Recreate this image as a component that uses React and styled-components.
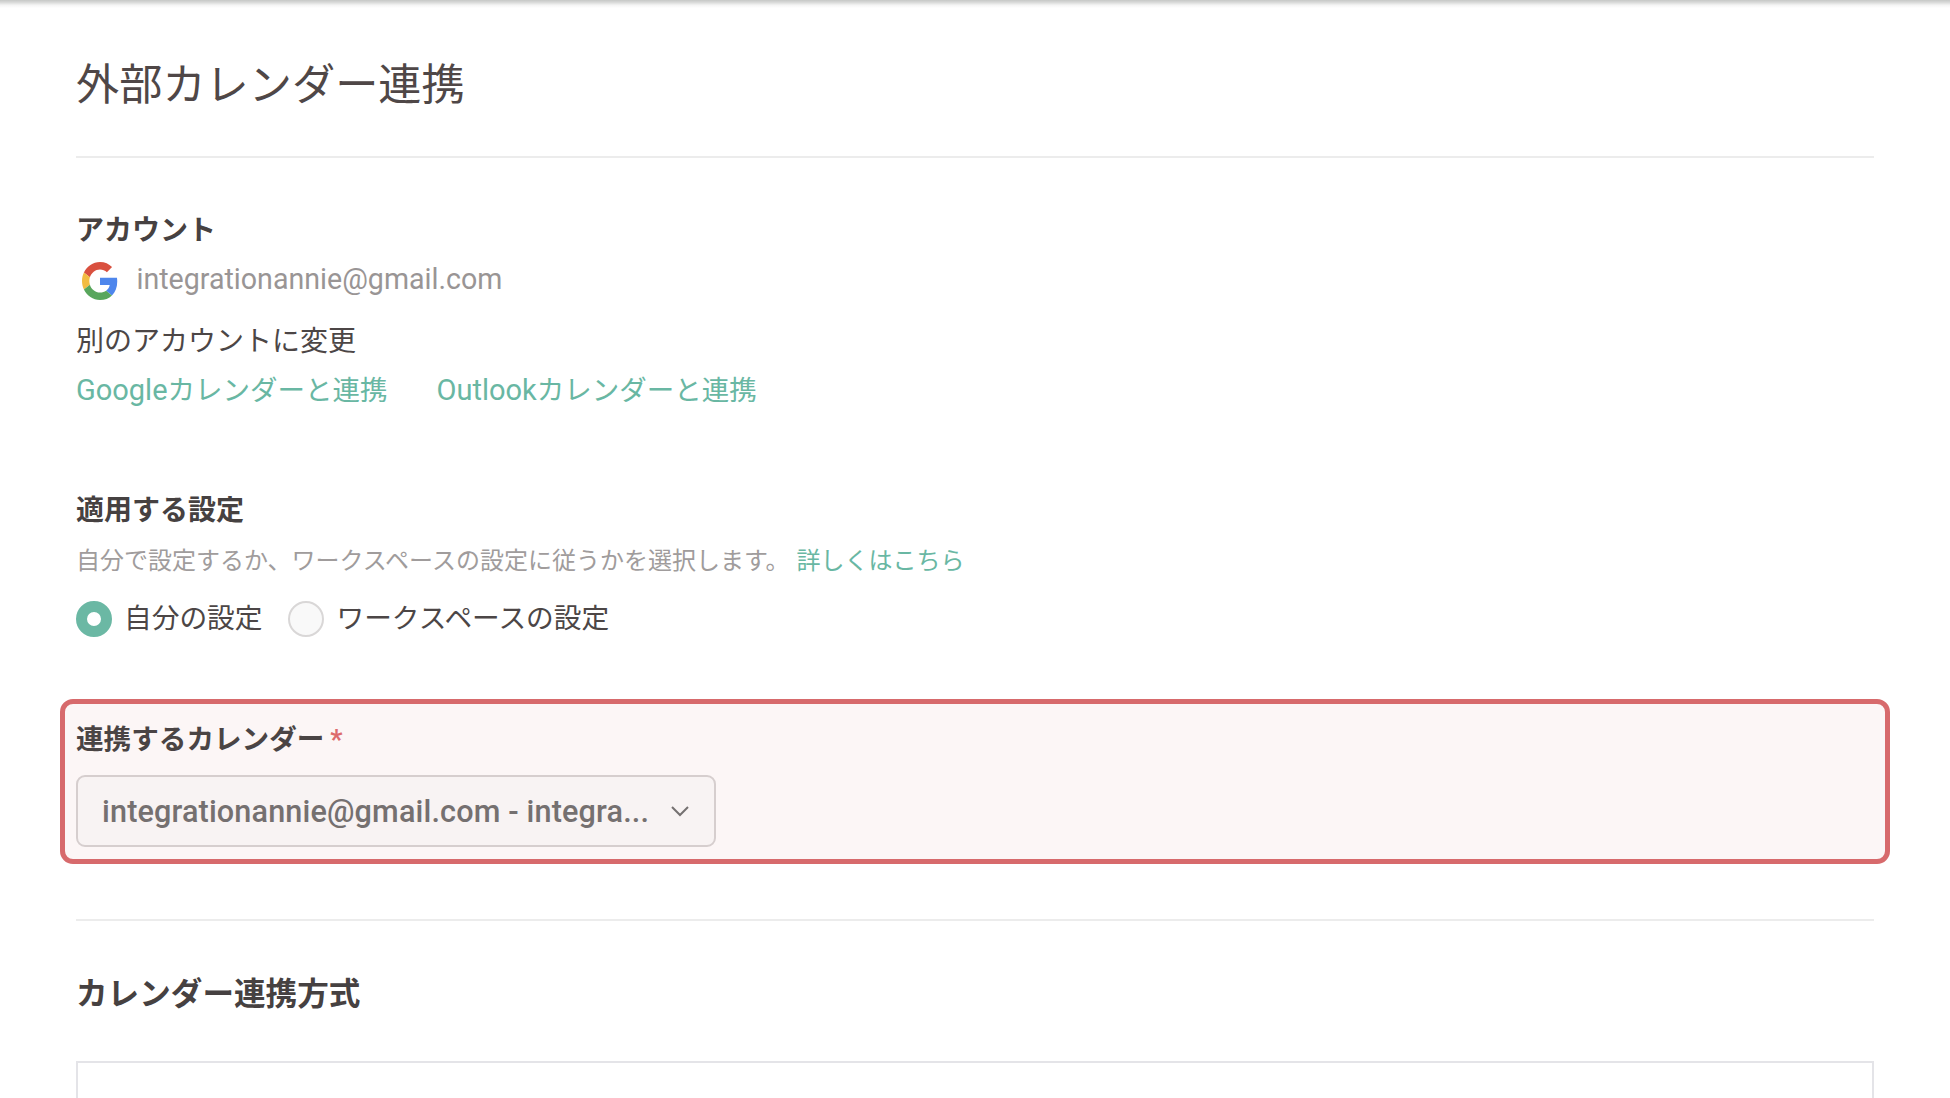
import React from "react";
import styled, { createGlobalStyle } from "styled-components";

const Global = createGlobalStyle`
  html, body { margin: 0; padding: 0; background: #fff; height: 100%; overflow: hidden; }
  body { font-family: Roboto, "Noto Sans CJK JP", sans-serif; color: #4c4646; }
`;

const Page = styled.main`
  height: 1098px;
  overflow: hidden;
  box-sizing: border-box;
  padding: 0 76px;
`;

const TopEdge = styled.div`
  height: 8px;
  margin: 0 -76px;
  background: linear-gradient(#c6c8c6, #d9dad9 30%, #f5f5f5 65%, #fff);
`;

const Title = styled.h1`
  margin: 50px 0 0;
  font-size: 43.2px;
  line-height: 56px;
  font-weight: 400;
  color: #4f4747;
`;

const Divider = styled.hr`
  margin: ${(p) => p.$top}px 0 0;
  border: 0;
  height: 2px;
  background: #ececec;
`;

const SectionLabel = styled.h2`
  margin: ${(p) => p.$top}px 0 0;
  font-size: 28px;
  line-height: 36px;
  font-weight: 700;
  color: #464141;
`;

const AccountRow = styled.div`
  display: flex;
  align-items: center;
  gap: 18.5px;
  margin-top: 13px;
  padding-left: 6px;
  height: 38px;
`;

const Email = styled.span`
  font-size: 28.6px;
  line-height: 32px;
  color: #999595;
  position: relative;
  top: -2px;
`;

const Plain = styled.div`
  margin-top: 24px;
  font-size: 28px;
  line-height: 36px;
  color: #4c4646;
`;

const LinkRow = styled.div`
  display: flex;
  gap: 49px;
  margin-top: 12px;
  font-size: 27.5px;
  line-height: 36px;
`;

const Latin = styled.span`
  font-size: 29px;
`;

const TextLink = styled.a`
  color: #69b7a3;
  text-decoration: none;
`;

const Description = styled.p`
  display: flex;
  gap: 7px;
  margin: 15px 0 0;
  font-size: 24px;
  line-height: 34px;
  color: #a09c9c;
`;

const RadioRow = styled.div`
  display: flex;
  align-items: center;
  margin-top: 22px;
  height: 38px;
`;

const RadioOption = styled.label`
  display: flex;
  align-items: center;
  gap: 12px;
  margin-right: 26px;
  font-size: 27.7px;
  line-height: 36px;
  color: #4c4646;
`;

const RadioDot = styled.span`
  box-sizing: border-box;
  width: 36px;
  height: 36px;
  border-radius: 50%;
  background: ${(p) => (p.$on ? "#fff" : "#f9f9f9")};
  border: ${(p) => (p.$on ? "11px solid #6bb8a4" : "2px solid #d9d7d7")};
`;

const Highlight = styled.section`
  box-sizing: border-box;
  height: 165px;
  margin: 61px -16px 0 -16px;
  padding: 18px 11px 0;
  border: 5px solid #d76a6c;
  border-radius: 13px;
  background: #fcf6f6;
`;

const FieldLabel = styled.div`
  display: flex;
  align-items: baseline;
  gap: 6px;
  font-size: 27.6px;
  line-height: 36px;
  font-weight: 700;
  color: #4a4444;
`;

const Star = styled.span`
  font-size: 27px;
  font-weight: 700;
  line-height: 20px;
  color: #dd6b6d;
`;

const Select = styled.div`
  box-sizing: border-box;
  display: flex;
  align-items: center;
  justify-content: space-between;
  width: 640px;
  height: 72px;
  margin-top: 17px;
  padding: 0 24px;
  border: 2px solid #d6cece;
  border-radius: 9px;
  background: #f8f3f3;
  font-size: 30.6px;
  font-weight: 500;
  letter-spacing: 0.15px;
  color: #757070;
  white-space: nowrap;
`;

const Chevron = styled.svg`
  width: 20px;
  height: 12px;
  flex: none;
`;

const BigHeading = styled.h2`
  margin: 54px 0 0;
  font-size: 31.6px;
  line-height: 40px;
  font-weight: 700;
  color: #464141;
`;

const MethodBox = styled.div`
  box-sizing: border-box;
  height: 200px;
  margin-top: 46px;
  border: 2px solid #e4e4e8;
  background: #fff;
`;

const GoogleG = () => (
  <svg width="36" height="38" viewBox="0 0 48 48" aria-hidden="true" preserveAspectRatio="none">
    <path fill="#D9503F" d="M24 9.5c3.54 0 6.71 1.22 9.21 3.6l6.85-6.85C35.9 2.38 30.47 0 24 0 14.62 0 6.51 5.38 2.56 13.22l7.98 6.19C12.43 13.72 17.74 9.5 24 9.5z" />
    <path fill="#4E86EC" d="M46.98 24.55c0-1.57-.15-3.09-.38-4.55H24v9.02h12.94c-.58 2.96-2.26 5.48-4.78 7.18l7.73 6c4.51-4.18 7.09-10.36 7.09-17.65z" />
    <path fill="#F2BC42" d="M10.53 28.59c-.48-1.45-.76-2.99-.76-4.59s.27-3.14.76-4.59l-7.98-6.19C.92 16.46 0 20.12 0 24c0 3.88.92 7.54 2.56 10.78l7.97-6.19z" />
    <path fill="#58A65C" d="M24 48c6.48 0 11.93-2.13 15.89-5.81l-7.73-6c-2.15 1.45-4.92 2.3-8.16 2.3-6.26 0-11.57-4.22-13.47-9.91l-7.98 6.19C6.51 42.62 14.62 48 24 48z" />
  </svg>
);

export default function App() {
  return (
    <Page>
      <Global />
      <TopEdge />
      <Title>外部カレンダー連携</Title>
      <Divider $top={42} />

      <SectionLabel $top={55}>アカウント</SectionLabel>
      <AccountRow>
        <GoogleG />
        <Email>integrationannie@gmail.com</Email>
      </AccountRow>
      <Plain>別のアカウントに変更</Plain>
      <LinkRow>
        <TextLink href="#"><Latin>Google</Latin>カレンダーと連携</TextLink>
        <TextLink href="#"><Latin>Outlook</Latin>カレンダーと連携</TextLink>
      </LinkRow>

      <SectionLabel $top={84}>適用する設定</SectionLabel>
      <Description>
        <span>自分で設定するか、ワークスペースの設定に従うかを選択します。</span>
        <TextLink href="#">詳しくはこちら</TextLink>
      </Description>
      <RadioRow>
        <RadioOption>
          <RadioDot $on />
          自分の設定
        </RadioOption>
        <RadioOption>
          <RadioDot />
          ワークスペースの設定
        </RadioOption>
      </RadioRow>

      <Highlight>
        <FieldLabel>
          連携するカレンダー
          <Star>*</Star>
        </FieldLabel>
        <Select>
          <span>integrationannie@gmail.com - integra...</span>
          <Chevron viewBox="0 0 20 12" fill="none" stroke="#757070" strokeWidth="2" aria-hidden="true">
            <path d="M2 2l8 8 8-8" />
          </Chevron>
        </Select>
      </Highlight>

      <Divider $top={55} />
      <BigHeading>カレンダー連携方式</BigHeading>
      <MethodBox />
    </Page>
  );
}
